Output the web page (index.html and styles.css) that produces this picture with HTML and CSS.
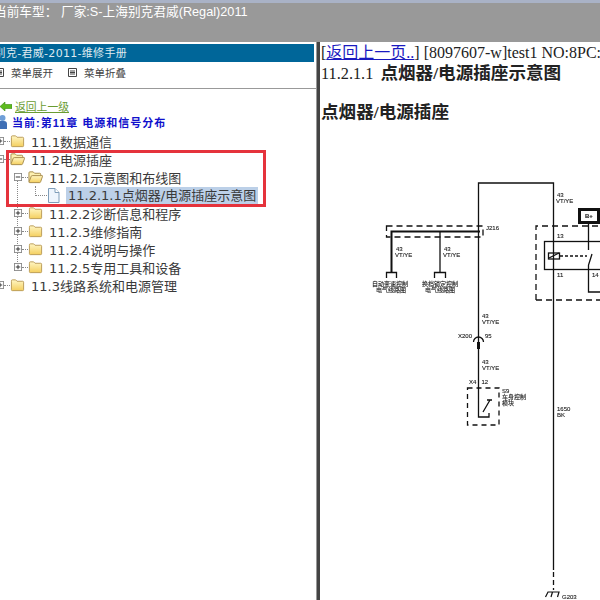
FILE: index.html
```html
<!DOCTYPE html>
<html lang="zh-CN">
<head>
    <meta charset="UTF-8">
    <title>维修手册</title>
    <link rel="stylesheet" href="styles.css">
</head>
<body>
    <svg class="icon-defs" width="0" height="0">
        <defs>
            <linearGradient id="folderFill" x1="0" y1="0" x2="0" y2="1">
                <stop offset="0" stop-color="#fff6c4"/>
                <stop offset="1" stop-color="#f4cf5e"/>
            </linearGradient>
            <symbol id="folderClosed" viewBox="0 0 16 14">
                <path d="M1.5 3.5 V2.5 Q1.5 1.5 2.5 1.5 H6 L7.5 3 H13.5 Q14.5 3 14.5 4 V12 Q14.5 13 13.5 13 H2.5 Q1.5 13 1.5 12 Z" fill="url(#folderFill)" stroke="#b99a55"/>
            </symbol>
            <symbol id="folderOpen" viewBox="0 0 16 14">
                <path d="M1 12 V2.5 Q1 1.5 2 1.5 H5.5 L7 3 H12.5 Q13.5 3 13.5 4 V5.5" fill="#fdf0b0" stroke="#a58a4a"/>
                <path d="M1 12.5 L3.5 6 Q3.8 5.5 4.5 5.5 H15 Q15.8 5.5 15.5 6.3 L13.5 12 Q13.2 13 12.3 13 H2 Q1 13 1 12.5 Z" fill="url(#folderFill)" stroke="#a58a4a"/>
            </symbol>
            <symbol id="expander-plus" viewBox="0 0 9 9">
                <rect x="0.5" y="0.5" width="8" height="8" fill="#fff" stroke="#888"/>
                <path d="M2 4.5 H7 M4.5 2 V7" stroke="#222"/>
            </symbol>
            <symbol id="expander-minus" viewBox="0 0 9 9">
                <rect x="0.5" y="0.5" width="8" height="8" fill="#fff" stroke="#888"/>
                <path d="M2 4.5 H7" stroke="#222"/>
            </symbol>
        </defs>
    </svg>

    <div class="top-bar">当前车型： 厂家:S-上海别克君威(Regal)2011</div>

    <div class="main">
        <div class="left-panel">
            <div class="manual-title">上海别克-君威-2011-维修手册</div>
            <div class="menu-tools">
                <span class="menu-tool">
                    <svg width="9" height="9" viewBox="0 0 9 9"><path d="M.5.5h8v8h-8z M2 3h5 M2 4.5h5 M2 6h5" fill="none" stroke="#444"/></svg>
                    菜单展开
                </span>
                <span class="menu-tool">
                    <svg width="9" height="9" viewBox="0 0 9 9"><path d="M.5.5h8v8h-8z M2 3h5 M2 4.5h5 M2 6h5" fill="none" stroke="#444"/></svg>
                    菜单折叠
                </span>
            </div>

            <div class="back-row">
                <svg width="12" height="9" viewBox="0 0 12 9"><path d="M0 4.5 L5 0 V2.5 H12 V6.5 H5 V9 Z" fill="#5dbb1e" stroke="#3a8a10" stroke-width=".6"/></svg>
                <a class="back-link">返回上一级</a>
            </div>
            <div class="current-row">
                <svg width="7" height="14" viewBox="0 0 7 14"><circle cx="2.5" cy="3" r="3" fill="#6f9fd8"/><path d="M-2 14 V8 Q-2 6 1 6 H4 Q7 6 7 9 V14 Z" fill="#3f6fb5"/></svg>
                <span>当前:第11章 电源和信号分布</span>
            </div>

            <div class="tree">
                <div class="tree-row">
                    <svg class="expander" width="8" height="8"><use href="#expander-plus"/></svg>
                    <span class="dots"></span>
                    <svg class="folder" width="15" height="14"><use href="#folderClosed"/></svg>
                    <span>11.1数据通信</span>
                </div>
                <div class="tree-row">
                    <svg class="expander" width="8" height="8"><use href="#expander-minus"/></svg>
                    <span class="dots"></span>
                    <svg class="folder" width="15" height="14"><use href="#folderOpen"/></svg>
                    <span>11.2电源插座</span>
                </div>
                <div class="tree-row level-2">
                    <svg class="expander" width="8" height="8"><use href="#expander-minus"/></svg>
                    <span class="dots"></span>
                    <svg class="folder" width="15" height="14"><use href="#folderOpen"/></svg>
                    <span>11.2.1示意图和布线图</span>
                </div>
                <div class="tree-row level-3">
                    <span class="tree-line"></span>
                    <svg class="page" width="13" height="15" viewBox="0 0 13 15"><path d="M1.5.5 H8 L12 4.5 V14.5 H1.5 Z" fill="#eef5fd" stroke="#7f9db9"/><path d="M8 .5 V4.5 H12" fill="#fff" stroke="#7f9db9"/></svg>
                    <span class="selected">11.2.1.1点烟器/电源插座示意图</span>
                </div>
                <div class="tree-row level-2">
                    <svg class="expander" width="8" height="8"><use href="#expander-plus"/></svg>
                    <span class="dots"></span>
                    <svg class="folder" width="15" height="14"><use href="#folderClosed"/></svg>
                    <span>11.2.2诊断信息和程序</span>
                </div>
                <div class="tree-row level-2">
                    <svg class="expander" width="8" height="8"><use href="#expander-plus"/></svg>
                    <span class="dots"></span>
                    <svg class="folder" width="15" height="14"><use href="#folderClosed"/></svg>
                    <span>11.2.3维修指南</span>
                </div>
                <div class="tree-row level-2">
                    <svg class="expander" width="8" height="8"><use href="#expander-plus"/></svg>
                    <span class="dots"></span>
                    <svg class="folder" width="15" height="14"><use href="#folderClosed"/></svg>
                    <span>11.2.4说明与操作</span>
                </div>
                <div class="tree-row level-2">
                    <svg class="expander" width="8" height="8"><use href="#expander-plus"/></svg>
                    <span class="dots"></span>
                    <svg class="folder" width="15" height="14"><use href="#folderClosed"/></svg>
                    <span>11.2.5专用工具和设备</span>
                </div>
                <div class="tree-row">
                    <svg class="expander" width="8" height="8"><use href="#expander-plus"/></svg>
                    <span class="dots"></span>
                    <svg class="folder" width="15" height="14"><use href="#folderClosed"/></svg>
                    <span>11.3线路系统和电源管理</span>
                </div>
                <div class="red-box"></div>
            </div>
        </div>

        <div class="splitter"></div>

        <div class="right-panel">
            <div class="nav-line">[<a class="nav-back">返回上一页..</a>] [8097607-w]test1 NO:8PC:</div>
            <div class="doc-title">11.2.1.1 <b>点烟器/电源插座示意图</b></div>
            <div class="doc-sub">点烟器/电源插座</div>

            <svg class="diagram" width="280" height="480" viewBox="320 120 280 480">
                <g fill="none" stroke="#111" stroke-width="1.3">
                    <path d="M478.5 345 V183 H553.5 V570"/>
                    <path d="M553.5 572 V590" stroke-dasharray="5 3"/>
                    <path d="M478.5 345 V417 H489 V413 M483 412 L490 400 M487 400 H492"/>
                    <path d="M473.5 342 A5 5 0 0 1 483.5 342"/>
                    <path d="M391.5 272 V231.5 H480" stroke-width="2"/>
                    <path d="M440 231.5 V272"/>
                    <path d="M386.5 278 V272.5 H396.5 V278 M434.5 278 V272.5 H445.5 V278"/>
                    <path d="M588.5 222 V250 M592 254 L588.5 265 V292 H600"/>
                    <rect x="544.5" y="241.5" width="60" height="28"/>
                    <rect x="548.5" y="253" width="11" height="6"/>
                    <path d="M549 258 L559 253"/>
                    <path d="M560 256 H587" stroke-dasharray="3 2"/>
                    <rect x="579.5" y="209.5" width="19" height="13" stroke-width="3"/>
                    <path d="M386.5 226 H483 V237 H386.5 Z" stroke-dasharray="6 4"/>
                    <path d="M536 300 V226 H610 M536 300 H610" stroke-dasharray="6 4"/>
                    <rect x="467.5" y="388" width="31.5" height="37" stroke-dasharray="5 4"/>
                    <path d="M545.5 597 L548 592 H559 L557.5 597 M552.5 592 L551 597" stroke-width="1.2"/>
                </g>
                <path d="M477 342 H480 V349 H477 Z" fill="#111"/>
                <g class="wire-label">
                    <text x="557" y="197">43</text><text x="556" y="203">VT/YE</text>
                    <text x="396" y="251">43</text><text x="395" y="257">VT/YE</text>
                    <text x="444" y="251">43</text><text x="443" y="257">VT/YE</text>
                    <text x="482" y="317.5">43</text><text x="482" y="323.5">VT/YE</text>
                    <text x="482" y="364">43</text><text x="482" y="370">VT/YE</text>
                    <text x="458" y="337.5">X200</text><text x="485" y="337.5">95</text>
                    <text x="469" y="384">X4</text><text x="481.5" y="384">12</text>
                    <text x="486" y="230">J216</text>
                    <text x="557" y="238">13</text><text x="557" y="277">11</text><text x="592" y="277">14</text>
                    <text x="557" y="411">1650</text><text x="557" y="417">BK</text>
                    <text x="562" y="599">G203</text>
                    <text x="585" y="218" class="bold">B+</text>
                    <text x="502" y="393">S9</text><text x="502" y="399">车身控制</text><text x="502" y="405">模块</text>
                    <text x="372" y="285.5">自动变速控制</text><text x="376" y="291.5">电气线路图</text>
                    <text x="422" y="285.5">换档锁定控制</text><text x="425" y="291.5">电气线路图</text>
                </g>
            </svg>
        </div>
    </div>
</body>
</html>
```

FILE: styles.css
```css
html, body {
    margin: 0;
    padding: 0;
    height: 600px;
    overflow: hidden;
}
body {
    background: #fff;
    font-family: "Liberation Sans", "Noto Sans CJK SC", sans-serif;
    color: #333;
}
.icon-defs {
    display: block;
    height: 0;
}
.top-bar {
    height: 39px;
    background: #999;
    border-top: 3px solid #a9b2c6;
    color: #fff;
    font-size: 12.7px;
    line-height: 18px;
    margin-left: -6px;
    white-space: nowrap;
}
.main {
    display: flex;
    height: 558px;
}
.left-panel {
    width: 316px;
    flex: none;
    overflow: hidden;
}
.manual-title {
    height: 18px;
    margin: 2px 2px 0 -28px;
    background: #069;
    color: #dfe9ef;
    font-family: "DejaVu Sans", "Noto Sans CJK SC", sans-serif;
    font-size: 11px;
    line-height: 20px;
    letter-spacing: .3px;
    white-space: nowrap;
}
.menu-tools {
    display: flex;
    gap: 15px;
    height: 27px;
    margin-left: -5px;
    padding-bottom: 5px;
    box-sizing: border-box;
    align-items: center;
    border-bottom: 1px solid #999;
    font-size: 10.5px;
    color: #444;
}
.menu-tool {
    display: flex;
    align-items: center;
    gap: 7px;
}
.back-row {
    display: flex;
    align-items: center;
    gap: 3px;
    height: 16px;
    margin-top: 9px;
}
.back-link {
    color: #6a9c32;
    font-size: 10.8px;
    text-decoration: underline;
}
.current-row {
    display: flex;
    align-items: center;
    gap: 5px;
    height: 16px;
    color: #1111cc;
    font-size: 11px;
    font-weight: bold;
    letter-spacing: 1px;
}
.tree {
    position: relative;
    margin-top: 2px;
}
.tree::before {
    content: "";
    position: absolute;
    left: 17px;
    top: 44px;
    height: 90px;
    border-left: 1px dotted #888;
}
.tree-row {
    display: flex;
    align-items: center;
    height: 18px;
    margin-left: -4px;
    font-family: "DejaVu Sans", "Noto Sans CJK SC", sans-serif;
    font-size: 13px;
    color: #3a3a3a;
    white-space: nowrap;
}
.expander {
    position: relative;
}
.dots {
    width: 6px;
    border-top: 1px dotted #888;
}
.folder {
    margin-right: 6px;
}
.level-2 {
    margin-left: 14px;
}
.level-3 {
    margin-left: 35px;
}
.tree-line {
    width: 11px;
    height: 9px;
    align-self: flex-start;
    border-left: 1px dotted #888;
    border-bottom: 1px dotted #888;
}
.page {
    margin-right: 6px;
}
.selected {
    background: #bcd0e8;
    padding: 0 2px;
    line-height: 17px;
}
.red-box {
    position: absolute;
    left: 6px;
    top: 18px;
    width: 254px;
    height: 51px;
    border: 3px solid #e5333c;
}
.splitter {
    width: 4px;
    flex: none;
    background: #444;
    border-left: 1px solid #999;
    box-sizing: border-box;
}
.right-panel {
    flex: 1;
    position: relative;
    overflow: hidden;
    padding-left: 1px;
    font-family: "Liberation Serif", "Noto Sans CJK SC", serif;
    color: #222;
    white-space: nowrap;
}
.nav-line {
    font-size: 16px;
    line-height: 20px;
    padding-top: 1px;
}
.nav-back {
    color: #1a1ac0;
    text-decoration: underline;
}
.doc-title {
    font-size: 16.3px;
    line-height: 22px;
    margin-top: -1px;
}
.doc-title b {
    font-size: 17.6px;
    margin-left: 3px;
}
.doc-sub {
    font-size: 17.6px;
    font-weight: bold;
    line-height: 24px;
    margin-top: 15px;
}
.diagram {
    position: absolute;
    left: 0;
    top: 78px;
    filter: blur(.35px);
}
.wire-label text {
    font-family: "Liberation Sans", "Noto Sans CJK SC", sans-serif;
    font-size: 6px;
    fill: #222;
    stroke: #222;
    stroke-width: .12px;
}
.wire-label .bold {
    font-weight: bold;
}
```
